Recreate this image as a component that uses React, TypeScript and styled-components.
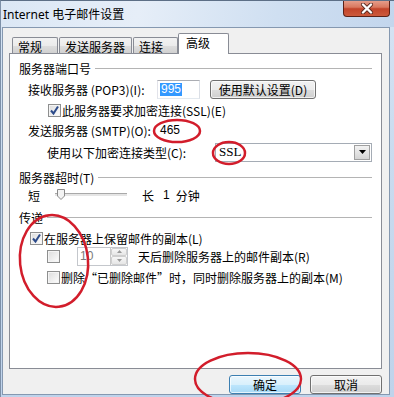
import React from "react";
import styled, { createGlobalStyle } from "styled-components";

const GlobalStyle = createGlobalStyle`
  html, body {
    margin: 0;
    padding: 0;
    background: #ffffff;
  }
  body {
    font-family: "Noto Sans CJK SC", "Noto Sans", sans-serif;
    font-size: 12px;
    color: #000;
  }
`;

const Window = styled.div`
  position: relative;
  width: 394px;
  height: 397px;
  box-sizing: border-box;
  overflow: hidden;
  display: flex;
  flex-direction: column;
  background: linear-gradient(to bottom, #d6e4f4 0%, #c9dbef 40%, #bfd3eb 100%);
  border-left: 1px solid #7d90a8;
  border-top: 1px solid #5d6f86;
`;

const TitleBar = styled.div`
  height: 26px;
  display: flex;
  align-items: center;
  padding-left: 2px;
  background: linear-gradient(100deg, #dbe7f5 0%, #e6eef8 35%, #cfdff1 70%, #c3d6ed 100%);
`;

const Title = styled.span`
  font-family: "Noto Sans", "Noto Sans CJK SC", sans-serif;
  font-size: 12px;
  color: #000;
  margin-top: -1px;
`;

const CloseButton = styled.div`
  margin-left: auto;
  margin-right: 4px;
  margin-top: -1px;
  align-self: flex-start;
  width: 47px;
  height: 17px;
  box-sizing: border-box;
  border: 1px solid #5b2117;
  border-top: none;
  border-radius: 0 0 4px 4px;
  background: linear-gradient(to bottom, #e7a391 0%, #d9785f 45%, #c2442a 55%, #cc5a3c 100%);
  display: flex;
  align-items: center;
  justify-content: center;
`;

const Client = styled.div`
  flex: 1;
  margin: 0 4px 2px 1px;
  border: 1px solid #8598b0;
  background: #f0f0f0;
  padding: 5px 7px 0 6px;
  display: flex;
  flex-direction: column;
`;

const TabRow = styled.div`
  height: 21px;
  display: flex;
  align-items: flex-end;
  gap: 1px;
  padding-left: 3px;
`;

const Tab = styled.div<{ $w: number; $active?: boolean }>`
  width: ${(p) => p.$w}px;
  height: ${(p) => (p.$active ? 21 : 17)}px;
  margin-left: ${(p) => (p.$active ? -1 : 0)}px;
  box-sizing: border-box;
  border: 1px solid #898c95;
  border-bottom: none;
  border-radius: 2px 2px 0 0;
  padding-left: ${(p) => (p.$active ? 7 : 5)}px;
  display: flex;
  align-items: center;
  white-space: nowrap;
  position: relative;
  z-index: ${(p) => (p.$active ? 2 : 0)};
  background: ${(p) =>
    p.$active ? "#ffffff" : "linear-gradient(to bottom, #f2f2f2 0%, #ebebeb 50%, #dddddd 51%, #cfcfcf 100%)"};
  padding-bottom: ${(p) => (p.$active ? 3 : 0)}px;
`;

const Panel = styled.div`
  margin-top: -1px;
  height: 316px;
  box-sizing: border-box;
  border: 1px solid #898c95;
  background: #ffffff;
  padding: 5px 9px 0 9px;
  display: flex;
  flex-direction: column;
  position: relative;
  z-index: 1;
`;

const Row = styled.div<{ $top?: number; $indent?: number }>`
  height: 18px;
  margin-top: ${(p) => p.$top ?? 0}px;
  padding-left: ${(p) => p.$indent ?? 0}px;
  display: flex;
  align-items: center;
  white-space: nowrap;
`;

const GroupLine = styled.div`
  flex: 1;
  height: 1px;
  margin-left: 4px;
  margin-top: 1px;
  background: #b4b4b4;
`;

const Label = styled.span<{ $w?: number }>`
  display: inline-block;
  width: ${(p) => (p.$w ? `${p.$w}px` : "auto")};
  flex-shrink: 0;
`;

const TextBox = styled.div`
  width: 43px;
  height: 19px;
  box-sizing: border-box;
  border: 1px solid #abadb3;
  border-left-color: #e2e3ea;
  border-right-color: #dbdfe6;
  border-bottom-color: #e3e9ef;
  padding: 1px 0 0 2px;
  display: flex;
  align-items: center;
`;

const Selected = styled.span`
  background: #3399ff;
  color: #fff;
  padding: 0 1px;
  line-height: 13px;
  font-family: "Liberation Sans", sans-serif;
`;

const PlainValue = styled.span`
  padding-left: 3px;
  font-family: "Liberation Sans", sans-serif;
`;

const PushButton = styled.div<{ $w: number; $default?: boolean }>`
  width: ${(p) => p.$w}px;
  height: 19px;
  box-sizing: border-box;
  border: 1px solid ${(p) => (p.$default ? "#3c7fb1" : "#707070")};
  border-radius: 3px;
  background: ${(p) =>
    p.$default
      ? "linear-gradient(to bottom, #eaf6fd 0%, #d9f0fc 50%, #bee6fd 51%, #a7d9f5 100%)"
      : "linear-gradient(to bottom, #f2f2f2 0%, #ebebeb 50%, #dddddd 51%, #cfcfcf 100%)"};
  box-shadow: inset 0 0 0 1px rgba(255, 255, 255, 0.7);
  display: flex;
  align-items: center;
  justify-content: center;
  flex-shrink: 0;
`;

const Box = styled.div<{ $checked?: boolean }>`
  width: 13px;
  height: 13px;
  box-sizing: border-box;
  border: 1px solid #8e8f8f;
  background: linear-gradient(135deg, #dcdcdc 0%, #f0f0f0 60%, #ffffff 100%);
  box-shadow: inset 0 0 0 1px #f4f4f4;
  display: flex;
  align-items: center;
  justify-content: center;
  flex-shrink: 0;
  margin-right: 1px;
`;

const Check = ({ checked }: { checked?: boolean }) => (
  <Box $checked={checked}>
    {checked && (
      <svg width="11" height="11" viewBox="0 0 11 11">
        <path d="M2 5.5 L4.5 8.5 L9 1.5" fill="none" stroke="#2c4b8a" strokeWidth="2" />
      </svg>
    )}
  </Box>
);

const Combo = styled.div`
  width: 158px;
  height: 19px;
  box-sizing: border-box;
  border: 1px solid #a5acb5;
  background: #fff;
  display: flex;
  align-items: center;
  justify-content: space-between;
  padding: 0 1px 0 3px;
`;

const ComboValue = styled.span`
  font-family: "Liberation Serif", serif;
  font-size: 13px;
`;

const ArrowBox = styled.div`
  width: 16px;
  height: 15px;
  box-sizing: border-box;
  border: 1px solid #a0a0a0;
  background: linear-gradient(to bottom, #f2f2f2 0%, #e4e4e4 50%, #d4d4d4 100%);
  display: flex;
  align-items: center;
  justify-content: center;
`;

const SliderTrack = styled.div`
  position: relative;
  width: 72px;
  height: 4px;
  box-sizing: border-box;
  border-top: 1px solid #a9a9a9;
  border-bottom: 1px solid #ffffff;
  background: #e5e5e5;
  margin: 0 15px 0 15px;
`;

const Thumb = styled.svg`
  position: absolute;
  left: 2px;
  top: -5px;
`;

const SpinBox = styled.div`
  width: 51px;
  height: 19px;
  box-sizing: border-box;
  border: 1px solid #c4c7cc;
  background: #fff;
  display: flex;
  margin-left: 16px;
  margin-right: 10px;
`;

const SpinText = styled.span`
  flex: 1;
  padding: 1px 0 0 2px;
  color: #7a7a7a;
  font-family: "Liberation Sans", sans-serif;
`;

const SpinArrows = styled.div`
  width: 16px;
  display: flex;
  flex-direction: column;
  border-left: 1px solid #c9c9c9;
`;

const SpinHalf = styled.div`
  flex: 1;
  background: linear-gradient(to bottom, #f7f7f7, #e6e6e6);
  border: 1px solid #cfcfcf;
  border-radius: 2px;
  display: flex;
  align-items: center;
  justify-content: center;
`;

const Footer = styled.div`
  margin-top: 6px;
  display: flex;
  justify-content: flex-end;
  gap: 9px;
`;

const Overlay = styled.svg`
  position: absolute;
  left: -1px;
  top: -1px;
  pointer-events: none;
  z-index: 5;
`;

const GroupHeader = ({ text, top }: { text: string; top?: number }) => (
  <Row $top={top}>
    <span>{text}</span>
    <GroupLine />
  </Row>
);

export default function App() {
  return (
    <>
      <GlobalStyle />
      <Window>
        <TitleBar>
          <Title>Internet 电子邮件设置</Title>
          <CloseButton>
            <svg width="14" height="11" viewBox="0 0 14 11">
              <path d="M3 1.5 L11 9.5 M11 1.5 L3 9.5" stroke="#5a2a20" strokeWidth="4" strokeLinecap="round" />
              <path d="M3 1.5 L11 9.5 M11 1.5 L3 9.5" stroke="#ffffff" strokeWidth="2.4" strokeLinecap="round" />
            </svg>
          </CloseButton>
        </TitleBar>
        <Client>
          <TabRow>
            <Tab $w={46}>常规</Tab>
            <Tab $w={73}>发送服务器</Tab>
            <Tab $w={45}>连接</Tab>
            <Tab $w={51} $active>
              高级
            </Tab>
          </TabRow>
          <Panel>
            <GroupHeader text="服务器端口号" />
            <Row $top={3} $indent={9}>
              <Label $w={129}>接收服务器 (POP3)(I):</Label>
              <TextBox>
                <Selected>995</Selected>
              </TextBox>
              <PushButton $w={106} style={{ marginLeft: 10 }}>
                使用默认设置(D)
              </PushButton>
            </Row>
            <Row $top={3} $indent={29}>
              <Check checked />
              <span>此服务器要求加密连接(SSL)(E)</span>
            </Row>
            <Row $top={2} $indent={9}>
              <Label $w={129}>发送服务器 (SMTP)(O):</Label>
              <PlainValue>465</PlainValue>
            </Row>
            <Row $top={4} $indent={28}>
              <Label $w={168}>使用以下加密连接类型(C):</Label>
              <Combo>
                <ComboValue>SSL</ComboValue>
                <ArrowBox>
                  <svg width="7" height="4" viewBox="0 0 7 4">
                    <path d="M0 0 H7 L3.5 4 Z" fill="#000" />
                  </svg>
                </ArrowBox>
              </Combo>
            </Row>
            <GroupHeader text="服务器超时(T)" top={7} />
            <Row $top={0} $indent={9}>
              <span>短</span>
              <SliderTrack>
                <Thumb width="8" height="11" viewBox="0 0 8 11">
                  <path d="M0.5 0.5 H7.5 V7 L4 10.5 L0.5 7 Z" fill="#f3f3f3" stroke="#8a8a8a" />
                </Thumb>
              </SliderTrack>
              <span>长</span>
              <PlainValue style={{ margin: "0 6px 0 6px" }}>1</PlainValue>
              <span>分钟</span>
            </Row>
            <GroupHeader text="传递" top={4} />
            <Row $top={3} $indent={11}>
              <Check checked />
              <span>在服务器上保留邮件的副本(L)</span>
            </Row>
            <Row $top={0} $indent={28}>
              <Check />
              <SpinBox>
                <SpinText>10</SpinText>
                <SpinArrows>
                  <SpinHalf>
                    <svg width="5" height="3" viewBox="0 0 5 3">
                      <path d="M0 3 H5 L2.5 0 Z" fill="#9a9a9a" />
                    </svg>
                  </SpinHalf>
                  <SpinHalf>
                    <svg width="5" height="3" viewBox="0 0 5 3">
                      <path d="M0 0 H5 L2.5 3 Z" fill="#9a9a9a" />
                    </svg>
                  </SpinHalf>
                </SpinArrows>
              </SpinBox>
              <span>天后删除服务器上的邮件副本(R)</span>
            </Row>
            <Row $top={3} $indent={28}>
              <Check />
              <span>删除“已删除邮件”时，同时删除服务器上的副本(M)</span>
            </Row>
          </Panel>
          <Footer>
            <PushButton $w={72} $default>
              确定
            </PushButton>
            <PushButton $w={72}>取消</PushButton>
          </Footer>
        </Client>
        <Overlay width="394" height="397" viewBox="0 0 394 397">
          <g fill="none" stroke="#d21d2b" strokeWidth="2.5">
            <ellipse cx="177" cy="131" rx="23" ry="11" />
            <ellipse cx="229" cy="153" rx="16" ry="11" />
            <ellipse cx="54" cy="261" rx="34" ry="46" transform="rotate(-6 54 261)" />
            <ellipse cx="248" cy="379" rx="53" ry="26" />
          </g>
        </Overlay>
      </Window>
    </>
  );
}
